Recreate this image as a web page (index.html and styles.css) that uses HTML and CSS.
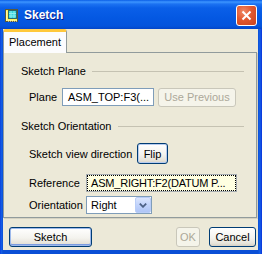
FILE: index.html
```html
<!DOCTYPE html>
<html lang="en">
<head>
    <meta charset="UTF-8">
    <meta name="viewport" content="width=device-width, initial-scale=1.0">
    <title>Sketch</title>
    <link rel="stylesheet" href="styles.css">
</head>
<body>

    <div class="window">
        <div class="titlebar">
            <svg class="app-icon" width="13" height="13" viewBox="0 0 13 13">
                <rect x="0.5" y="0.5" width="12" height="12" fill="#FFF25C" stroke="#5A5A3A"/>
                <path d="M1 3h1M1 5h1M1 7h1M1 9h1M1 11h1M3 12h1M5 12h1M7 12h1M9 12h1M11 12h1" stroke="#fff" stroke-width="1"/>
                <rect x="3.5" y="1.5" width="8" height="8" fill="#35D6DC" stroke="#2A6A70"/>
                <path d="M6 2v7M9 2v7M4 4.5h7M4 7h7" stroke="#8EEFF2" stroke-width="1"/>
            </svg>
            <span class="title">Sketch</span>
            <button class="close-btn">
                <svg width="11" height="11" viewBox="0 0 11 11">
                    <path d="M1.5 1.5l8 8M9.5 1.5l-8 8" stroke="#fff" stroke-width="2"/>
                </svg>
            </button>
        </div>

        <div class="client">
            <div class="tabs">
                <div class="tab active">Placement</div>
            </div>

            <div class="panel">
                <!-- Sketch Plane group -->
                <div class="group-head">
                    <span>Sketch Plane</span>
                    <i class="rule"></i>
                </div>
                <div class="row row-plane">
                    <span class="lbl lbl-plane">Plane</span>
                    <div class="field field-plane">ASM_TOP:F3(...</div>
                    <button class="btn btn-prev" disabled>Use Previous</button>
                </div>

                <!-- Sketch Orientation group -->
                <div class="group-head group-orient">
                    <span>Sketch Orientation</span>
                    <i class="rule"></i>
                </div>
                <div class="row row-dir">
                    <span class="lbl lbl-dir">Sketch view direction</span>
                    <button class="btn btn-flip">Flip</button>
                </div>
                <div class="row row-ref">
                    <span class="lbl lbl-wide">Reference</span>
                    <div class="field field-ref">ASM_RIGHT:F2(DATUM P...</div>
                </div>
                <div class="row row-orient">
                    <span class="lbl lbl-wide">Orientation</span>
                    <div class="select">
                        <span class="select-text">Right</span>
                        <span class="select-arrow">
                            <svg width="8" height="5" viewBox="0 0 8 5">
                                <path d="M0.8 0.6l3.2 3.2 3.2-3.2" fill="none" stroke="#4D6185" stroke-width="1.8"/>
                            </svg>
                        </span>
                    </div>
                </div>
            </div>

            <div class="footer">
                <button class="btn btn-default btn-sketch">Sketch</button>
                <button class="btn btn-ok" disabled>OK</button>
                <button class="btn btn-cancel">Cancel</button>
            </div>
        </div>
    </div>

</body>
</html>
```

FILE: styles.css
```css
* {
    box-sizing: border-box;
}

body {
    margin: 0;
    font-family: "Liberation Sans", Arial, sans-serif;
    font-size: 11px;
    color: #000;
}

.window {
    width: 262px;
    height: 254px;
    display: flex;
    flex-direction: column;
    background: linear-gradient(90deg, #0831D9 0, #1460E8 1px, #0A4FD6 3px, #0A4FD6 258px, #1460E8 260px, #0831D9 262px);
}

/* Title bar */
.titlebar {
    height: 29px;
    display: flex;
    align-items: center;
    padding: 1px 5px 0 5px;
    background: linear-gradient(#0A5EE6 0, #3D95FF 2px, #1C72F2 4px, #0A5FE8 8px, #0458E2 18px, #0454DC 26px, #0345C8 29px);
    color: #fff;
}

.app-icon {
    flex: none;
    margin-top: 1px;
}

.title {
    margin-left: 6px;
    font-weight: bold;
    font-size: 12px;
    text-shadow: 1px 1px 0 #0A1E8C;
}

.close-btn {
    margin-left: auto;
    width: 21px;
    height: 21px;
    padding: 0;
    display: flex;
    align-items: center;
    justify-content: center;
    border: 1px solid #fff;
    border-radius: 3px;
    background: radial-gradient(circle at 35% 30%, #F08A68 0, #E2582F 45%, #C9421E 100%);
}

/* Client area */
.client {
    flex: 1;
    margin: 0 4px 4px 3px;
    background: #ECE9D8;
    display: flex;
    flex-direction: column;
}

.tabs {
    display: flex;
    height: 23px;
}

.tab {
    position: relative;
    z-index: 1;
    width: 64px;
    height: 24px;
    line-height: 20px;
    text-align: center;
    background: #FCFCFE;
    border: 1px solid #919B9C;
    border-top: 3px solid #FFC83C;
    border-bottom: none;
    border-radius: 3px 3px 0 0;
}

.panel {
    width: 254px;
    height: 166px;
    border: 1px solid #919B9C;
    box-shadow: 1px 1px 0 #D5D2C2;
    padding: 11px 12px 0 17px;
}

.group-head {
    display: flex;
    align-items: center;
    height: 14px;
}

.group-orient {
    margin-top: 12px;
}

.rule {
    flex: 1;
    margin-left: 6px;
    border-top: 1px solid #C5C2B2;
}

.row {
    display: flex;
    align-items: center;
    padding-left: 8px;
}

.row-plane {
    height: 20px;
    margin-top: 9px;
}

.row-dir {
    height: 21px;
    margin-top: 10px;
}

.row-ref {
    height: 18px;
    margin-top: 10px;
}

.row-orient {
    height: 18px;
    margin-top: 4px;
}

.lbl {
    flex: none;
    white-space: nowrap;
}

.lbl-plane {
    width: 33px;
}

.lbl-dir {
    width: 108px;
}

.lbl-wide {
    width: 57px;
}

.field {
    height: 18px;
    line-height: 16px;
    padding-left: 5px;
    border: 1px solid #7F9DB9;
    background: #fff;
    white-space: nowrap;
    overflow: hidden;
}

.field-plane {
    width: 92px;
}

.field-ref {
    width: 151px;
    padding-left: 4px;
    background: #FFFFE1;
    border-color: #A5ACB2;
    outline: 1px dotted #000;
    outline-offset: -2px;
    letter-spacing: -0.2px;
}

/* Buttons */
.btn {
    font-family: inherit;
    font-size: 11px;
    color: #000;
    height: 20px;
    padding: 0;
    border: 1px solid #003C74;
    border-radius: 3px;
    background: linear-gradient(#FFFFFF, #F4F3EE 55%, #E6E3DA 85%, #D6D0C5);
}

.btn:disabled {
    color: #ACA899;
    border-color: #C9C7BA;
    background: #F5F4EA;
}

.btn-prev {
    width: 78px;
    height: 19px;
    margin-left: 4px;
}

.btn-flip {
    width: 31px;
    height: 21px;
    box-shadow: inset 0 0 0 1px #B7CCEF;
}

.btn-default {
    box-shadow: inset 0 0 0 1px #9DB9EB, inset 0 -1px 0 1px #7B9BE0;
}

/* Combo box */
.select {
    width: 66px;
    height: 18px;
    display: flex;
    border: 1px solid #7F9DB9;
    background: #fff;
}

.select-text {
    flex: 1;
    line-height: 16px;
    padding-left: 4px;
}

.select-arrow {
    width: 16px;
    display: flex;
    align-items: center;
    justify-content: center;
    border: 1px solid #B9CDF7;
    border-radius: 2px;
    background: linear-gradient(#DCE6FD, #C1D3FB 50%, #AFC5F6);
}

/* Footer buttons */
.footer {
    display: flex;
    padding: 9px 2px 0 6px;
}

.btn-sketch {
    width: 83px;
}

.btn-ok {
    width: 24px;
    margin-left: auto;
}

.btn-cancel {
    width: 47px;
    margin-left: 9px;
}
```
